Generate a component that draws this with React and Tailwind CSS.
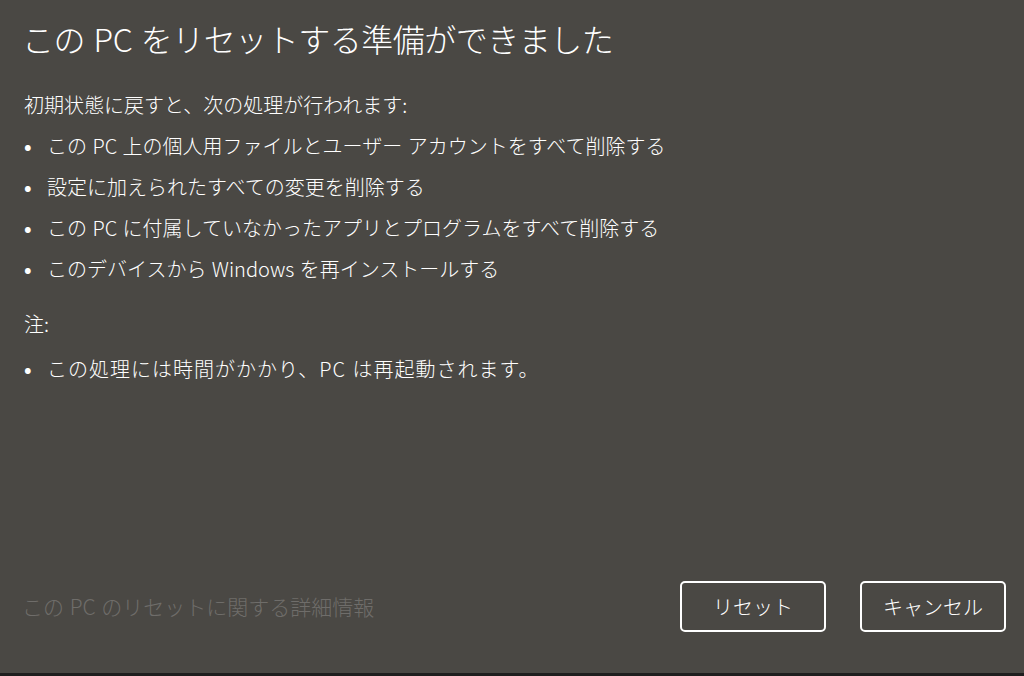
export default function App() {
  const font = { fontFamily: '"Noto Sans CJK JP", "Noto Sans", sans-serif' };
  const items = [
    "この PC 上の個人用ファイルとユーザー アカウントをすべて削除する",
    "設定に加えられたすべての変更を削除する",
    "この PC に付属していなかったアプリとプログラムをすべて削除する",
    "このデバイスから Windows を再インストールする",
  ];
  return (
    <div className="w-[1024px] h-[676px] bg-[#1e1e1e] flex flex-col font-light" style={font}>
      <div className="flex-1 bg-[#4a4844] flex flex-col text-white">
        <h1 className="pl-[22px] pt-[18px] text-[32px] leading-[40px] font-light tracking-[-0.5px] [word-spacing:2px]">
          この PC をリセットする準備ができました
        </h1>
        <div className="flex-1 pl-[24px] pt-[26px] text-[20px] leading-[41px] [word-spacing:1px]">
          <p>初期状態に戻すと、次の処理が行われます:</p>
          <ul>
            {items.map((t) => (
              <li key={t} className="flex items-center">
                <span className="w-[23px] text-[20px] font-bold">•</span>
                <span>{t}</span>
              </li>
            ))}
          </ul>
          <p className="mt-[14px] mb-[4px]">注:</p>
          <ul>
            <li className="flex items-center">
              <span className="w-[23px] text-[20px] font-bold">•</span>
              <span className="tracking-[1px]">この処理には時間がかかり、PC は再起動されます。</span>
            </li>
          </ul>
        </div>
        <div className="flex items-center pl-[22px] pr-[18px] pb-[41px]">
          <span className="flex-1 text-[21px] text-[#6f6d6a] [word-spacing:1px]">
            この PC のリセットに関する詳細情報
          </span>
          <button className="w-[146px] h-[51px] border-2 border-white rounded-[5px] text-white text-[20px] font-light">
            リセット
          </button>
          <button className="ml-[34px] w-[146px] h-[51px] border-2 border-white rounded-[5px] text-white text-[20px] font-light">
            キャンセル
          </button>
        </div>
      </div>
      <div className="h-[3px]" />
    </div>
  );
}
